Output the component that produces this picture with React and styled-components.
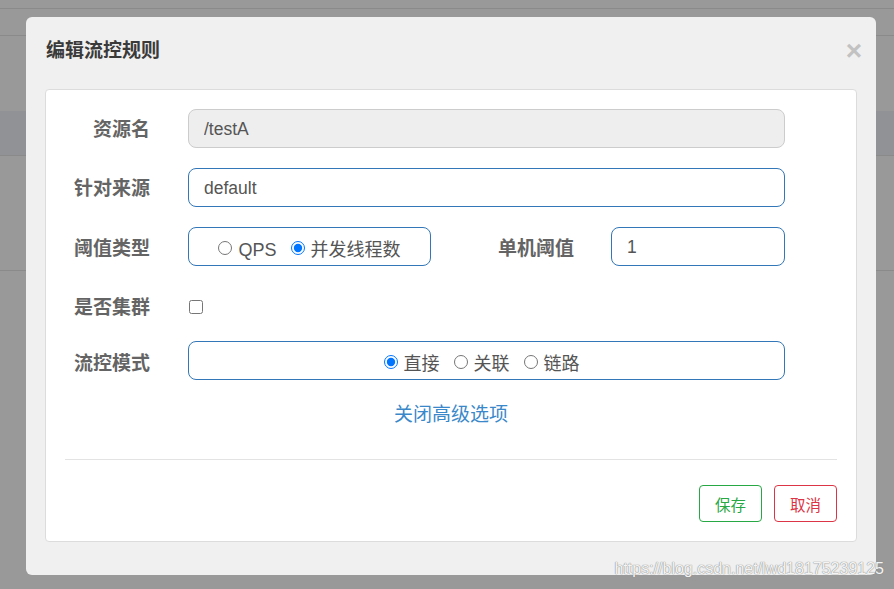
import React from "react";
import styled, { createGlobalStyle } from "styled-components";

const Global = createGlobalStyle`
  html, body { margin: 0; padding: 0; }
  body {
    width: 894px;
    height: 589px;
    overflow: hidden;
    background: #999999;
    font-family: "Liberation Sans", "Noto Sans CJK SC", sans-serif;
  }
`;

const Page = styled.div`
  position: relative;
  width: 894px;
  height: 589px;
  background: #999999;
  overflow: hidden;
`;

const BgBar = styled.div`
  height: ${(p) => p.$h}px;
  background: ${(p) => p.$bg || "#999999"};
  border-bottom: ${(p) => (p.$line ? "1px solid #8a8a8a" : "none")};
`;

const Modal = styled.div`
  position: absolute;
  left: 26px;
  top: 17px;
  width: 850px;
  height: 558px;
  background: #f0f0f0;
  border-radius: 6px;
  display: flex;
  flex-direction: column;
  box-sizing: border-box;
`;

const Header = styled.div`
  height: 72px;
  box-sizing: border-box;
  padding: 21px 20px 0;
`;

const Title = styled.h4`
  margin: 0;
  font-size: 19px;
  line-height: 26px;
  font-weight: bold;
  color: #3a3a3a;
`;

const Close = styled.button`
  position: absolute;
  top: 20px;
  right: 14px;
  border: none;
  background: none;
  padding: 0;
  font-family: "Liberation Sans", sans-serif;
  font-size: 28px;
  line-height: 28px;
  font-weight: bold;
  color: #c2c2c2;
  cursor: pointer;
`;

const Body = styled.div`
  padding: 0 19px 33px;
  flex: 1;
  display: flex;
  min-width: 0;
`;

const Panel = styled.div`
  flex: 1;
  min-width: 0;
  background: #fff;
  border: 1px solid #dcdcdc;
  border-radius: 4px;
  padding: 19px 19px 19px;
  display: flex;
  flex-direction: column;
`;

const Row = styled.div`
  display: flex;
  align-items: center;
  height: ${(p) => p.$h ?? 39}px;
  margin-bottom: 20px;
  padding-top: ${(p) => p.$pt ?? 0}px;
  box-sizing: border-box;
  gap: ${(p) => p.$gap ?? 38}px;
`;

const Label = styled.label`
  width: ${(p) => p.$w ?? 85}px;
  flex: none;
  text-align: right;
  font-size: 19px;
  font-weight: bold;
  color: #646464;
  line-height: 26px;
  padding-top: ${(p) => p.$dy ?? 2}px;
  margin-right: ${(p) => p.$mr ?? 0}px;
`;

const Input = styled.input`
  box-sizing: border-box;
  height: 39px;
  width: ${(p) => (p.$w ? `${p.$w}px` : "597px")};
  flex: none;
  border: 1px solid ${(p) => (p.readOnly ? "#cccccc" : "#3377b8")};
  background: ${(p) => (p.readOnly ? "#eeeeee" : "#ffffff")};
  border-radius: 8px;
  padding: 2px 15px 0;
  font-family: "Liberation Sans", "Noto Sans CJK SC", sans-serif;
  font-size: 17.5px;
  color: #555;
  outline: none;
`;

const RadioBox = styled.div`
  box-sizing: border-box;
  height: 39px;
  width: ${(p) => p.$w}px;
  flex: none;
  border: 1px solid #3377b8;
  border-radius: 8px;
  display: flex;
  align-items: center;
  justify-content: center;
  padding-top: 6px;
  padding-right: ${(p) => p.$pr ?? 0}px;
  gap: 14px;
`;

const RadioItem = styled.label`
  display: flex;
  align-items: center;
  gap: 6px;
  font-size: 18px;
  color: #555;
  line-height: 24px;
`;

const Radio = styled.input.attrs({ type: "radio" })`
  width: 14px;
  height: 14px;
  margin: 0 0 4px;
  accent-color: #0075ff;
`;

const Check = styled.input.attrs({ type: "checkbox" })`
  width: 14px;
  height: 14px;
  margin: 0 0 0 1px;
`;

const LinkRow = styled.div`
  text-align: center;
  padding-top: 2px;
`;

const Link = styled.a`
  font-size: 19px;
  line-height: 26px;
  color: #3a88c9;
  text-decoration: none;
  cursor: pointer;
`;

const Divider = styled.hr`
  border: none;
  border-top: 1px solid #e3e3e3;
  margin: 31px 0 25px;
`;

const Footer = styled.div`
  display: flex;
  justify-content: flex-end;
  gap: 12px;
`;

const Btn = styled.button`
  box-sizing: border-box;
  width: 63px;
  height: 37px;
  background: #fff;
  border: 1px solid ${(p) => p.$c};
  color: ${(p) => p.$c};
  border-radius: 4px;
  font-family: "Liberation Sans", "Noto Sans CJK SC", sans-serif;
  font-size: 15.5px;
  cursor: pointer;
`;

const Watermark = styled.div`
  position: absolute;
  right: 10px;
  top: 558px;
  font-family: "Liberation Sans", sans-serif;
  font-size: 16px;
  line-height: 22px;
  color: rgba(255, 255, 255, 0.92);
  text-shadow: 0 0 1px #8a8a8a, 0 0 1px #8a8a8a;
  white-space: nowrap;
`;

export default function App() {
  return (
    <>
      <Global />
      <Page>
        <BgBar $h={8} $line />
        <BgBar $h={26} $line />
        <BgBar $h={75} />
        <BgBar $h={44} $bg="#909295" $line />
        <BgBar $h={114} $line />

        <Modal>
          <Header>
            <Title>编辑流控规则</Title>
          </Header>
          <Close aria-label="close">×</Close>
          <Body>
            <Panel>
              <Row>
                <Label>资源名</Label>
                <Input readOnly value="/testA" />
              </Row>
              <Row>
                <Label $dy={3}>针对来源</Label>
                <Input defaultValue="default" />
              </Row>
              <Row $gap={0}>
                <Label $mr={38} $dy={5}>阈值类型</Label>
                <RadioBox $w={243}>
                  <RadioItem>
                    <Radio name="grade" />
                    QPS
                  </RadioItem>
                  <RadioItem>
                    <Radio name="grade" defaultChecked />
                    并发线程数
                  </RadioItem>
                </RadioBox>
                <Label $w={143} $mr={37} $dy={5}>单机阈值</Label>
                <Input $w={174} defaultValue="1" />
              </Row>
              <Row $h={35} $pt={6}>
                <Label>是否集群</Label>
                <Check />
              </Row>
              <Row>
                <Label $dy={7}>流控模式</Label>
                <RadioBox $w={597} $pr={10}>
                  <RadioItem>
                    <Radio name="strategy" defaultChecked />
                    直接
                  </RadioItem>
                  <RadioItem>
                    <Radio name="strategy" />
                    关联
                  </RadioItem>
                  <RadioItem>
                    <Radio name="strategy" />
                    链路
                  </RadioItem>
                </RadioBox>
              </Row>
              <LinkRow>
                <Link>关闭高级选项</Link>
              </LinkRow>
              <Divider />
              <Footer>
                <Btn $c="#28a745">保存</Btn>
                <Btn $c="#dc3545">取消</Btn>
              </Footer>
            </Panel>
          </Body>
        </Modal>
        <Watermark>https://blog.csdn.net/lwd18175239125</Watermark>
      </Page>
    </>
  );
}
